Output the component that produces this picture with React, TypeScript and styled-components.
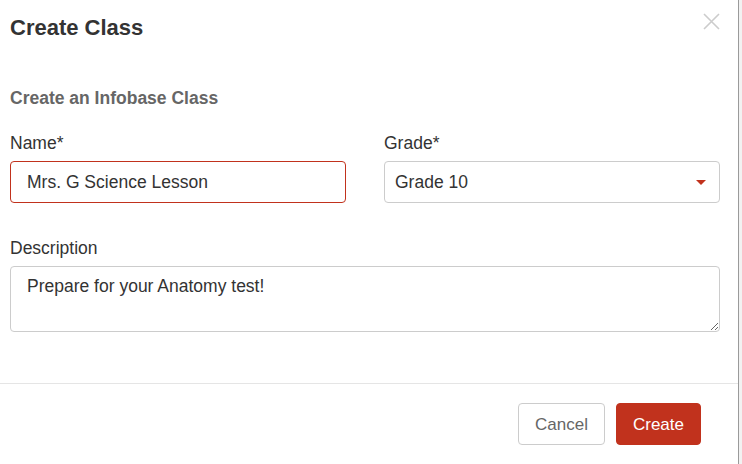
import styled, { createGlobalStyle } from "styled-components";

const GlobalStyle = createGlobalStyle`
  body {
    margin: 0;
    background: #ffffff;
    font-family: "Liberation Sans", Arial, sans-serif;
  }
`;

const brand = "#c1321d";

const App = () => {
  return (
    <>
      <GlobalStyle />
      <Page>
        <Modal>
          <Header>
            <Title>Create Class</Title>
            <CloseButton aria-label="Close">
              <svg width="17" height="17" viewBox="0 0 17 17">
                <path d="M1 1 L16 16 M16 1 L1 16" stroke="#cccccc" strokeWidth="1.6" fill="none" />
              </svg>
            </CloseButton>
          </Header>
          <Body>
            <Subheading>Create an Infobase Class</Subheading>
            <FieldRow>
              <Field>
                <Label>Name*</Label>
                <TextInput $active defaultValue="Mrs. G Science Lesson" />
              </Field>
              <Field>
                <Label>Grade*</Label>
                <SelectBox>
                  <span>Grade 10</span>
                  <Caret />
                </SelectBox>
              </Field>
            </FieldRow>
            <Field>
              <Label>Description</Label>
              <TextArea defaultValue="Prepare for your Anatomy test!" />
            </Field>
          </Body>
          <Footer>
            <Button>Cancel</Button>
            <Button $primary>Create</Button>
          </Footer>
        </Modal>
        <Backdrop />
      </Page>
    </>
  );
};

const Page = styled.div`
  display: flex;
  height: 464px;
`;

const Modal = styled.div`
  width: 738px;
  background: #ffffff;
  border-right: 1px solid #9a9a9a;
  display: flex;
  flex-direction: column;
`;

const Backdrop = styled.div`
  flex: 1;
  background: #f2f2f2;
`;

const Header = styled.div`
  display: flex;
  justify-content: space-between;
  align-items: flex-start;
  padding: 16px 18px 0 10px;
`;

const Title = styled.h4`
  margin: 0;
  font-size: 22px;
  line-height: 24px;
  font-weight: 700;
  color: #333333;
`;

const CloseButton = styled.button`
  border: none;
  background: none;
  padding: 0;
  margin-top: -3px;
  width: 17px;
  height: 17px;
  display: flex;
  cursor: pointer;
`;

const Body = styled.div`
  padding: 0 18px 0 10px;
  display: flex;
  flex-direction: column;
`;

const Subheading = styled.h5`
  margin: 48px 0 25px;
  font-size: 17.5px;
  line-height: 20px;
  font-weight: 700;
  color: #666666;
`;

const FieldRow = styled.div`
  display: grid;
  grid-template-columns: 1fr 1fr;
  column-gap: 38px;
  margin-bottom: 35px;
`;

const Field = styled.div`
  display: flex;
  flex-direction: column;
`;

const Label = styled.label`
  font-size: 17.5px;
  line-height: 21px;
  color: #333333;
  margin-bottom: 7px;
`;

const TextInput = styled.input<{ $active?: boolean }>`
  box-sizing: border-box;
  height: 42px;
  padding: 0 16px;
  border: 1px solid ${(p) => (p.$active ? brand : "#cccccc")};
  border-radius: 4px;
  font-family: inherit;
  font-size: 17.5px;
  color: #333333;
  outline: none;
`;

const SelectBox = styled.div`
  box-sizing: border-box;
  height: 42px;
  padding: 0 13px 0 10px;
  border: 1px solid #cccccc;
  border-radius: 4px;
  display: flex;
  align-items: center;
  justify-content: space-between;
  font-size: 17.5px;
  color: #333333;
`;

const Caret = styled.span`
  width: 0;
  height: 0;
  border-left: 5px solid transparent;
  border-right: 5px solid transparent;
  border-top: 5px solid ${brand};
  margin-top: 1px;
`;

const TextArea = styled.textarea`
  box-sizing: border-box;
  height: 66px;
  padding: 9px 16px 7px;
  border: 1px solid #cccccc;
  border-radius: 4px;
  font-family: inherit;
  font-size: 17.5px;
  line-height: 21px;
  color: #333333;
  outline: none;
  resize: vertical;
`;

const Footer = styled.div`
  margin-top: 51px;
  border-top: 1px solid #e5e5e5;
  padding: 19px 37px 0 0;
  display: flex;
  justify-content: flex-end;
  gap: 11px;
`;

const Button = styled.button<{ $primary?: boolean }>`
  height: 42px;
  padding: 2px 16px 0;
  border-radius: 4px;
  border: 1px solid ${(p) => (p.$primary ? brand : "#cccccc")};
  background: ${(p) => (p.$primary ? brand : "#ffffff")};
  color: ${(p) => (p.$primary ? "#ffffff" : "#666666")};
  font-family: inherit;
  font-size: 17px;
  cursor: pointer;
`;

export default App;
